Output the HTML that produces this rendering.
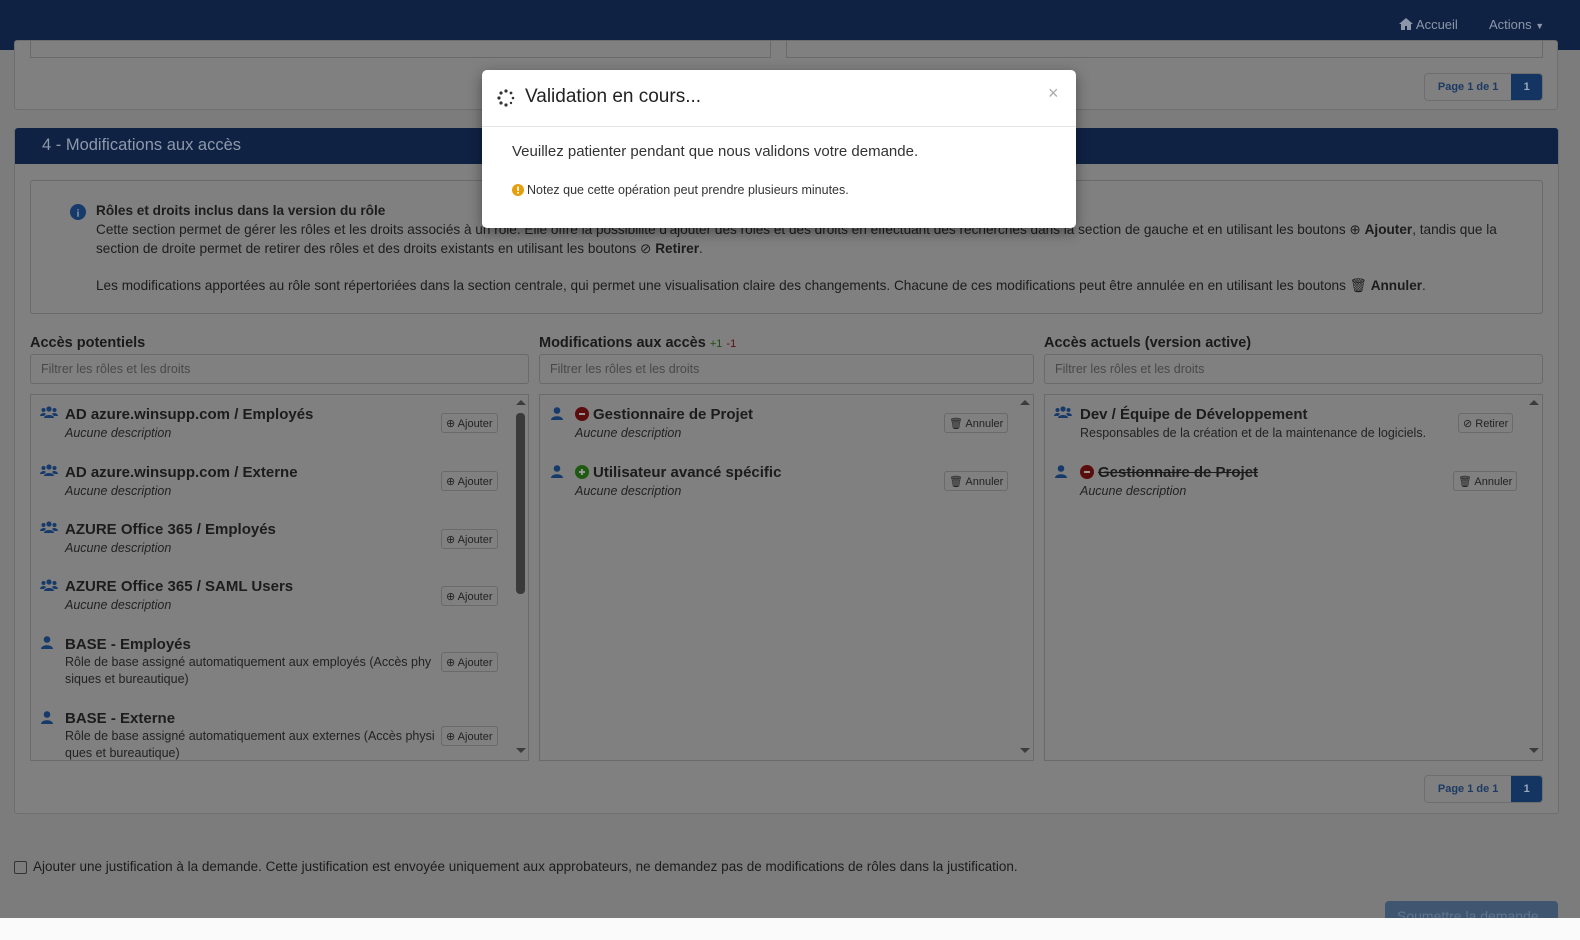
<!DOCTYPE html>
<html><head><meta charset="utf-8"><style>
*{box-sizing:border-box;margin:0;padding:0}
body{width:1580px;height:940px;overflow:hidden;background:#7c7c7c;font-family:"Liberation Sans",sans-serif;color:#1a1a1a;position:relative}
.a{position:absolute}
.nav{left:0;top:0;width:1580px;height:50px;background:#0f2244}
.navt{color:#8b96a8;font-size:13px;top:17px}
.panel{background:#808080;border:1px solid #6e6e6e;border-radius:3px}
.box{border:1px solid #6a6a6a}
.pg{height:28px;border:1px solid #6e6e6e;border-radius:4px;display:flex;font-size:11px;font-weight:bold;overflow:hidden}
.pg span{display:flex;align-items:center;justify-content:center}
.pg .l{width:87px;color:#1d3a63}
.pg .r{width:31px;background:#143562;color:#9aa9bd}
.h{font-size:14.5px;font-weight:bold;color:#1a1a1a}
.inp{height:30px;border:1px solid #6a6a6a;border-radius:3px;font-size:12.5px;color:#484848;padding:7px 10px}
.it{font-size:15px;font-weight:bold;color:#1c1c1c}
.ds{font-size:12.5px;font-style:italic;color:#222}
.dn{font-size:12.5px;color:#222;line-height:17px}
.btn{height:20px;border:1px solid #6a6a6a;border-radius:3px;font-size:11px;color:#222;display:flex;align-items:center;padding:0 4px;gap:2px}
.ico{fill:#163a6a}
.sc{width:0;height:0;border-left:5px solid transparent;border-right:5px solid transparent}
</style></head><body>
<div class="a nav"></div>
<div class="a navt" style="left:1399px"><svg width="14" height="12" viewBox="0 0 14 12" style="vertical-align:-1px"><path d="M7 0L0 6h2v6h4V8h2v4h4V6h2z" fill="#8b96a8"/></svg> Accueil</div>
<div class="a navt" style="left:1489px">Actions <span style="font-size:9px">▼</span></div>

<div class="a panel" style="left:14px;top:40px;width:1544px;height:70px"></div>
<div class="a box" style="left:30px;top:40px;width:741px;height:18px;border-top:none"></div>
<div class="a box" style="left:786px;top:40px;width:757px;height:18px;border-top:none"></div>
<div class="a pg" style="left:1424px;top:73px;width:119px"><span class="l">Page 1 de 1</span><span class="r">1</span></div>

<div class="a panel" style="left:14px;top:128px;width:1545px;height:686px"></div>
<div class="a" style="left:15px;top:128px;width:1543px;height:36px;background:#0f2244;border-radius:3px 3px 0 0"></div>
<div class="a" style="left:42px;top:136px;font-size:16.5px;color:#8d99ab">4 - Modifications aux accès</div>
<div class="a box" style="left:30px;top:180px;width:1513px;height:134px;border-radius:3px"></div>
<svg class="a" style="left:70px;top:204px" width="16" height="16"><circle cx="8" cy="8" r="8" fill="#163a6a"/><text x="8" y="12.5" font-size="10" font-weight="bold" text-anchor="middle" fill="#8a97aa" font-family="Liberation Serif">i</text></svg>
<div class="a" style="left:96px;top:201px;font-size:13.6px;line-height:19px;color:#1c1c1c;width:1440px">
<b>Rôles et droits inclus dans la version du rôle</b><br>
Cette section permet de gérer les rôles et les droits associés à un rôle. Elle offre la possibilité d'ajouter des rôles et des droits en effectuant des recherches dans la section de gauche et en utilisant les boutons ⊕ <b>Ajouter</b>, tandis que la<br>
section de droite permet de retirer des rôles et des droits existants en utilisant les boutons ⊘ <b>Retirer</b>.<br><div style="height:18px"></div>
Les modifications apportées au rôle sont répertoriées dans la section centrale, qui permet une visualisation claire des changements. Chacune de ces modifications peut être annulée en en utilisant les boutons 🗑 <b>Annuler</b>.</div>

<div class="a h" style="left:30px;top:335px">Accès potentiels</div>
<div class="a h" style="left:539px;top:335px">Modifications aux accès <span style="font-size:11px;font-weight:normal;color:#1f4d12">+1</span> <span style="font-size:11px;font-weight:normal;color:#5a0f0f">-1</span></div>
<div class="a h" style="left:1044px;top:335px">Accès actuels (version active)</div>
<div class="a inp" style="left:30px;top:354px;width:499px">Filtrer les rôles et les droits</div>
<div class="a inp" style="left:539px;top:354px;width:495px">Filtrer les rôles et les droits</div>
<div class="a inp" style="left:1044px;top:354px;width:499px">Filtrer les rôles et les droits</div>
<div class="a box" style="left:30px;top:394px;width:499px;height:367px"></div>
<div class="a box" style="left:539px;top:394px;width:495px;height:367px"></div>
<div class="a box" style="left:1044px;top:394px;width:499px;height:367px"></div>
<div class="a sc" style="left:516px;top:400px;border-bottom:5px solid #3c3c3c"></div>
<div class="a sc" style="left:516px;top:748px;border-top:5px solid #3c3c3c"></div>
<div class="a" style="left:516px;top:413px;width:9px;height:181px;background:#3a3a3a;border-radius:4px"></div>
<div class="a sc" style="left:1020px;top:400px;border-bottom:5px solid #3c3c3c"></div>
<div class="a sc" style="left:1020px;top:748px;border-top:5px solid #3c3c3c"></div>
<div class="a sc" style="left:1529px;top:400px;border-bottom:5px solid #3c3c3c"></div>
<div class="a sc" style="left:1529px;top:748px;border-top:5px solid #3c3c3c"></div>

<svg width="0" height="0" style="position:absolute"><defs>
<g id="grp"><circle cx="9" cy="3" r="2.6"/><circle cx="3.5" cy="4" r="2"/><circle cx="14.5" cy="4" r="2"/><path d="M4 12c0-4 10-4 10 0z"/><path d="M0 10c0-3 5-4 6-2l-2 2zM18 10c0-3-5-4-6-2l2 2z"/></g>
<g id="per"><circle cx="7" cy="3.5" r="3.3"/><path d="M1 13c0-5 12-5 12 0z"/></g>
</defs></svg>
<svg class="a ico" style="left:40px;top:406px" width="18" height="13"><use href="#grp"/></svg>
<div class="a it" style="left:65px;top:406px">AD azure.winsupp.com / Employés</div><div class="a ds" style="left:65px;top:426px">Aucune description</div>
<div class="a btn" style="left:441px;top:413px">⊕ Ajouter</div>
<svg class="a ico" style="left:40px;top:464px" width="18" height="13"><use href="#grp"/></svg>
<div class="a it" style="left:65px;top:464px">AD azure.winsupp.com / Externe</div><div class="a ds" style="left:65px;top:484px">Aucune description</div>
<div class="a btn" style="left:441px;top:471px">⊕ Ajouter</div>
<svg class="a ico" style="left:40px;top:521px" width="18" height="13"><use href="#grp"/></svg>
<div class="a it" style="left:65px;top:521px">AZURE Office 365 / Employés</div><div class="a ds" style="left:65px;top:541px">Aucune description</div>
<div class="a btn" style="left:441px;top:529px">⊕ Ajouter</div>
<svg class="a ico" style="left:40px;top:579px" width="18" height="13"><use href="#grp"/></svg>
<div class="a it" style="left:65px;top:578px">AZURE Office 365 / SAML Users</div><div class="a ds" style="left:65px;top:598px">Aucune description</div>
<div class="a btn" style="left:441px;top:586px">⊕ Ajouter</div>
<svg class="a ico" style="left:40px;top:636px" width="14" height="13"><use href="#per"/></svg>
<div class="a it" style="left:65px;top:636px">BASE - Employés</div><div class="a dn" style="left:65px;top:654px;width:375px">Rôle de base assigné automatiquement aux employés (Accès phy<br>siques et bureautique)</div>
<div class="a btn" style="left:441px;top:652px">⊕ Ajouter</div>
<svg class="a ico" style="left:40px;top:711px" width="14" height="13"><use href="#per"/></svg>
<div class="a it" style="left:65px;top:710px">BASE - Externe</div><div class="a dn" style="left:65px;top:728px;width:375px">Rôle de base assigné automatiquement aux externes (Accès physi<br>ques et bureautique)</div>
<div class="a btn" style="left:441px;top:726px">⊕ Ajouter</div>

<svg class="a ico" style="left:550px;top:407px" width="14" height="13"><use href="#per"/></svg>
<svg class="a" style="left:575px;top:407px" width="14" height="14"><circle cx="7" cy="7" r="7" fill="#5b0c0c"/><rect x="4" y="6" width="6" height="2" fill="#999"/></svg>
<div class="a it" style="left:593px;top:406px">Gestionnaire de Projet</div><div class="a ds" style="left:575px;top:426px">Aucune description</div>
<div class="a btn" style="left:944px;top:413px">🗑 Annuler</div>
<svg class="a ico" style="left:550px;top:465px" width="14" height="13"><use href="#per"/></svg>
<svg class="a" style="left:575px;top:465px" width="14" height="14"><circle cx="7" cy="7" r="7" fill="#1e5a12"/><rect x="4" y="6" width="6" height="2" fill="#999"/><rect x="6" y="4" width="2" height="6" fill="#999"/></svg>
<div class="a it" style="left:593px;top:464px">Utilisateur avancé spécific</div><div class="a ds" style="left:575px;top:484px">Aucune description</div>
<div class="a btn" style="left:944px;top:471px">🗑 Annuler</div>

<svg class="a ico" style="left:1054px;top:406px" width="18" height="13"><use href="#grp"/></svg>
<div class="a it" style="left:1080px;top:406px">Dev / Équipe de Développement</div><div class="a dn" style="left:1080px;top:425px">Responsables de la création et de la maintenance de logiciels.</div>
<div class="a btn" style="left:1458px;top:413px">⊘ Retirer</div>
<svg class="a ico" style="left:1054px;top:465px" width="14" height="13"><use href="#per"/></svg>
<svg class="a" style="left:1080px;top:465px" width="14" height="14"><circle cx="7" cy="7" r="7" fill="#5b0c0c"/><rect x="4" y="6" width="6" height="2" fill="#999"/></svg>
<div class="a it" style="left:1098px;top:464px;text-decoration:line-through">Gestionnaire de Projet</div><div class="a ds" style="left:1080px;top:484px">Aucune description</div>
<div class="a btn" style="left:1453px;top:471px">🗑 Annuler</div>

<div class="a pg" style="left:1424px;top:775px;width:119px"><span class="l">Page 1 de 1</span><span class="r">1</span></div>

<div class="a" style="left:14px;top:861px;width:13px;height:13px;border:1px solid #333;border-radius:2px"></div>
<div class="a" style="left:33px;top:859px;font-size:13.5px;color:#1c1c1c">Ajouter une justification à la demande. Cette justification est envoyée uniquement aux approbateurs, ne demandez pas de modifications de rôles dans la justification.</div>
<div class="a" style="left:1385px;top:901px;width:173px;height:30px;background:#3f5570;border-radius:4px;color:#5f7591;font-size:14px;padding:7px 12px">Soumettre la demande</div>
<div class="a" style="left:0;top:918px;width:1580px;height:22px;background:#fafafa"></div>

<div class="a" style="left:482px;top:70px;width:594px;height:158px;background:#fff;border-radius:5px;box-shadow:0 4px 14px rgba(0,0,0,.4)"></div>
<svg class="a" style="left:497px;top:89px" width="18" height="18"><g fill="#333"><circle cx="9" cy="2" r="1.6"/><circle cx="14" cy="4" r="1.4"/><circle cx="16" cy="9" r="1.3"/><circle cx="14" cy="14" r="1.2"/><circle cx="9" cy="16" r="1.6"/><circle cx="4" cy="14" r="1.6"/><circle cx="2" cy="9" r="1.6"/><circle cx="4" cy="4" r="1.6"/></g></svg>
<div class="a" style="left:525px;top:86px;font-size:19px;color:#222">Validation en cours...</div>
<div class="a" style="left:1048px;top:83px;font-size:18px;color:#aaa">×</div>
<div class="a" style="left:482px;top:126px;width:594px;height:1px;background:#e5e5e5"></div>
<div class="a" style="left:512px;top:143px;font-size:15px;color:#333">Veuillez patienter pendant que nous validons votre demande.</div>
<svg class="a" style="left:512px;top:184px" width="12" height="12"><circle cx="6" cy="6" r="6" fill="#e59e0c"/><rect x="5.2" y="2.5" width="1.6" height="4.5" fill="#fff"/><rect x="5.2" y="8" width="1.6" height="1.6" fill="#fff"/></svg>
<div class="a" style="left:527px;top:183px;font-size:12.5px;color:#333">Notez que cette opération peut prendre plusieurs minutes.</div>
</body></html>
